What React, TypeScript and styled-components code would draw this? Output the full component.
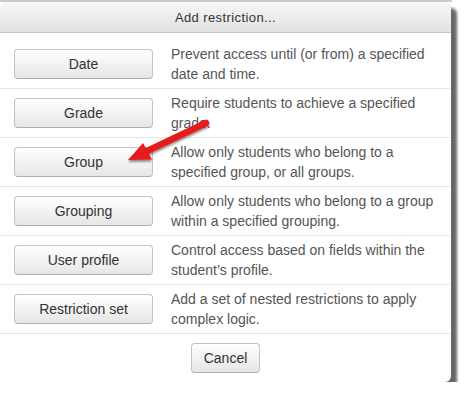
import styled, { createGlobalStyle } from 'styled-components'

type Restriction = {
  label: string
  description: string
}

const restrictions: Restriction[] = [
  {
    label: 'Date',
    description: 'Prevent access until (or from) a specified date and time.',
  },
  {
    label: 'Grade',
    description: 'Require students to achieve a specified grade.',
  },
  {
    label: 'Group',
    description: 'Allow only students who belong to a specified group, or all groups.',
  },
  {
    label: 'Grouping',
    description:
      'Allow only students who belong to a group within a specified grouping.',
  },
  {
    label: 'User profile',
    description: 'Control access based on fields within the student\u2019s profile.',
  },
  {
    label: 'Restriction set',
    description: 'Add a set of nested restrictions to apply complex logic.',
  },
]

export default function App() {
  return (
    <>
      <GlobalStyle />
      <Backdrop>
        <Dialog>
          <Header>Add restriction...</Header>
          <List>
            {restrictions.map((r) => (
              <Row key={r.label}>
                <Button>{r.label}</Button>
                <Description>{r.description}</Description>
              </Row>
            ))}
          </List>
          <Footer>
            <Button $small>Cancel</Button>
          </Footer>
          <Arrow width="451" height="380" viewBox="0 0 451 380">
            <defs>
              <filter id="arrowShadow" x="-20%" y="-20%" width="140%" height="160%">
                <feDropShadow dx="0" dy="2" stdDeviation="1.2" floodColor="#000" floodOpacity="0.45" />
              </filter>
            </defs>
            <g filter="url(#arrowShadow)">
              <line
                x1="206"
                y1="121"
                x2="145"
                y2="150"
                stroke="#e51a1f"
                strokeWidth="6.5"
                strokeLinecap="round"
              />
              <polygon points="128,158 143,141 152,157.5" fill="#e51a1f" />
            </g>
          </Arrow>
        </Dialog>
      </Backdrop>
    </>
  )
}

const GlobalStyle = createGlobalStyle`
  body {
    margin: 0;
    background: #fff;
    font-family: 'Liberation Sans', Arial, sans-serif;
  }
`

const Backdrop = styled.div`
  width: 452px;
  border-top: 2px solid #cbcbcb;
`

const Dialog = styled.div`
  position: relative;
  width: 451px;
  background: #fff;
  border-radius: 6px;
  box-shadow: 6px 6px 3px rgba(0, 0, 0, 0.6);
`

const Header = styled.div`
  height: 30px;
  display: flex;
  align-items: center;
  justify-content: center;
  border-bottom: 1px solid #c6c6c6;
  border-radius: 6px 6px 0 0;
  background: linear-gradient(#f7f7f7, #e2e2e2);
  color: #333;
  font-size: 13px;
  letter-spacing: 0.4px;
`

const List = styled.div`
  padding-top: 7px;
`

const Row = styled.div`
  display: grid;
  grid-template-columns: 139px 1fr;
  column-gap: 18px;
  align-items: center;
  height: 48px;
  padding: 0 2px 0 14px;
  border-bottom: 1px solid #e6e6e6;
`

const Button = styled.button<{ $small?: boolean }>`
  width: ${(p) => (p.$small ? '69px' : '139px')};
  height: 30px;
  padding: 0;
  border: 1px solid #c3c3c3;
  border-bottom-color: #adadad;
  border-radius: 4px;
  background: linear-gradient(#ffffff, #e6e6e6);
  box-shadow: inset 0 1px 0 rgba(255, 255, 255, 0.6);
  color: #333;
  font-family: 'Liberation Sans', Arial, sans-serif;
  font-size: 14px;
`

const Description = styled.div`
  color: #555;
  font-size: 14px;
  line-height: 20px;
`

const Footer = styled.div`
  height: 48px;
  display: flex;
  align-items: center;
  justify-content: center;
`

const Arrow = styled.svg`
  position: absolute;
  left: 0;
  top: 0;
  pointer-events: none;
`
